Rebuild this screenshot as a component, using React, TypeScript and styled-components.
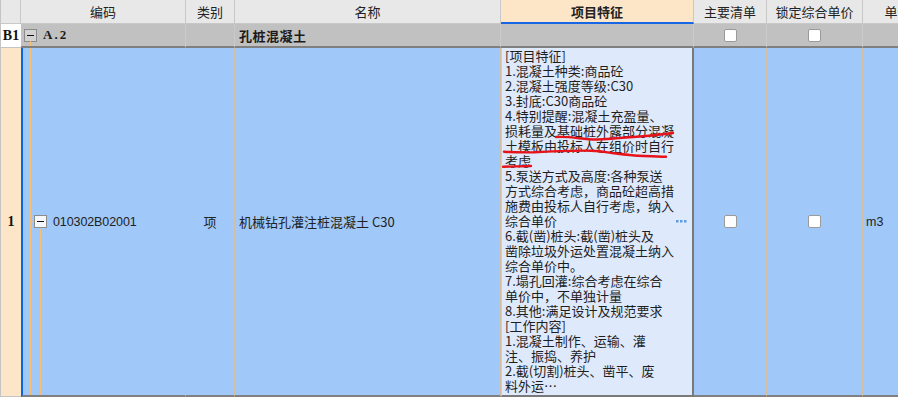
import React from "react";
import styled, { createGlobalStyle } from "styled-components";

const GlobalStyle = createGlobalStyle`
  html, body {
    margin: 0;
    padding: 0;
    background: #fff;
    overflow: hidden;
  }
  body {
    font-family: "Noto Sans CJK SC", "Liberation Sans", sans-serif;
    color: #222;
  }
`;

const FEATURES = [
  "[项目特征]",
  "1.混凝土种类:商品砼",
  "2.混凝土强度等级:C30",
  "3.封底:C30商品砼",
  "4.特别提醒:混凝土充盈量、",
  "损耗量及基础桩外露部分混凝",
  "土模板由投标人在组价时自行",
  "考虑",
  "5.泵送方式及高度:各种泵送",
  "方式综合考虑，商品砼超高措",
  "施费由投标人自行考虑，纳入",
  "综合单价",
  "6.截(凿)桩头:截(凿)桩头及",
  "凿除垃圾外运处置混凝土纳入",
  "综合单价中。",
  "7.塌孔回灌:综合考虑在综合",
  "单价中，不单独计量",
  "8.其他:满足设计及规范要求",
  "[工作内容]",
  "1.混凝土制作、运输、灌",
  "注、振捣、养护",
  "2.截(切割)桩头、凿平、废",
  "料外运…",
];

const Table = styled.div`
  display: grid;
  grid-template-columns: 21px 165px 49px 266px 193px 73px 96px 70px;
  grid-template-rows: 24px 24px 349px;
  width: 933px;
`;

const HeadCell = styled.div<{ $active?: boolean }>`
  display: flex;
  align-items: center;
  justify-content: center;
  box-sizing: border-box;
  background: ${(p) => (p.$active ? "#fde6c8" : "#e8e8e8")};
  border-right: 1px solid #c8c8c8;
  border-bottom: ${(p) => (p.$active ? "2px solid #1766e6" : "1px solid #c8c8c8")};
  font-size: 13px;
  font-weight: ${(p) => (p.$active ? 700 : 400)};
  color: #222;
  white-space: nowrap;
  overflow: hidden;
`;

const CornerCell = styled(HeadCell)`
  border-left: 1px solid #c4c4c4;
`;

const NumCell = styled.div<{ $peach?: boolean }>`
  display: flex;
  align-items: center;
  justify-content: center;
  box-sizing: border-box;
  background: ${(p) => (p.$peach ? "#fde6c8" : "#ffffff")};
  border-left: 1px solid #c4c4c4;
  border-bottom: 1px solid #c4c4c4;
  font-family: "Liberation Serif", serif;
  font-weight: 700;
  font-size: 14px;
  color: #111;
`;

const GroupCell = styled.div<{ $center?: boolean }>`
  position: relative;
  display: flex;
  align-items: center;
  justify-content: ${(p) => (p.$center ? "center" : "flex-start")};
  box-sizing: border-box;
  background: #c1c1c1;
  border-right: 1px solid #cbcbcb;
  border-bottom: 2px solid #808080;
  font-size: 13px;
  font-weight: 700;
  color: #1a1a1a;
`;

const GroupCode = styled(GroupCell)`
  padding-left: 3px;

  &::after {
    content: "";
    position: absolute;
    left: 9px;
    top: 17px;
    bottom: 0;
    width: 1px;
    background: #f7c06e;
  }
`;

const GroupName = styled(GroupCell)`
  padding-left: 4px;
  letter-spacing: 0.5px;
`;

const SerifLabel = styled.span`
  margin-left: 6px;
  font-family: "Liberation Serif", serif;
  font-weight: 700;
  font-size: 13px;
  letter-spacing: 2px;
`;

const MinusBox = styled.span<{ $stem?: boolean; $light?: boolean }>`
  position: relative;
  flex: none;
  width: 13px;
  height: 13px;
  box-sizing: border-box;
  border: 1px solid #8c8c8c;
  background: ${(p) => (p.$light ? "#f4f7fc" : "#d2d2d2")};

  &::before {
    content: "";
    position: absolute;
    left: 2px;
    right: 2px;
    top: 5px;
    height: 1px;
    background: #111;
  }

  &::after {
    content: "";
    display: ${(p) => (p.$stem ? "block" : "none")};
    position: absolute;
    left: -5px;
    width: 4px;
    top: 5px;
    height: 1px;
    background: #f7c06e;
  }
`;

const DataCell = styled.div<{ $center?: boolean }>`
  position: relative;
  display: flex;
  align-items: center;
  justify-content: ${(p) => (p.$center ? "center" : "flex-start")};
  box-sizing: border-box;
  background: #a0c8f8;
  border-right: 1px solid #d5bd9d;
  border-bottom: 2px solid #808080;
  font-size: 13px;
  color: #222;
`;

const CodeCell = styled(DataCell)`
  border-left: 2px solid #0b63e5;
  padding-left: 11px;

  &::before {
    content: "";
    position: absolute;
    left: 7px;
    top: 0;
    bottom: 0;
    width: 1px;
    background: #f7c06e;
  }

  &::after {
    content: "";
    position: absolute;
    left: 17px;
    top: calc(50% + 7px);
    bottom: 0;
    width: 1px;
    background: #f7c06e;
  }
`;

const CodeText = styled.span`
  margin-left: 6px;
  font-family: "Liberation Sans", sans-serif;
  font-size: 12.5px;
  letter-spacing: -0.1px;
  color: #222;
`;

const NameCell = styled(DataCell)`
  padding-left: 4px;
`;

const UnitCell = styled(DataCell)`
  padding-left: 3px;
  font-family: "Liberation Sans", sans-serif;
  font-size: 12.5px;
`;

const FeatureCell = styled.div`
  position: relative;
  box-sizing: border-box;
  background: #dee9fb;
  border-left: 1px solid #c9cdd3;
  border-right: 2px solid #7a7a7a;
  border-bottom: 2px solid #7a7a7a;
  padding: 0 0 0 3px;
  overflow: hidden;
`;

const FeatureLine = styled.div`
  height: 15px;
  line-height: 15px;
  font-size: 13px;
  white-space: nowrap;
  color: #1e1e1e;
`;

const Annotation = styled.svg`
  position: absolute;
  left: 0;
  top: 0;
  pointer-events: none;
`;

const MoreDots = styled.svg`
  position: absolute;
  right: 5px;
  top: calc(50% - 2px);
`;

const Check = styled.span`
  width: 13px;
  height: 13px;
  box-sizing: border-box;
  background: #fff;
  border: 1px solid #9a9a9a;
  border-radius: 2px;
`;

export default function App() {
  return (
    <>
      <GlobalStyle />
      <Table>
        <CornerCell />
        <HeadCell>编码</HeadCell>
        <HeadCell>类别</HeadCell>
        <HeadCell>名称</HeadCell>
        <HeadCell $active>项目特征</HeadCell>
        <HeadCell>主要清单</HeadCell>
        <HeadCell>锁定综合单价</HeadCell>
        <HeadCell>单位</HeadCell>

        <NumCell>B1</NumCell>
        <GroupCode>
          <MinusBox />
          <SerifLabel>A.2</SerifLabel>
        </GroupCode>
        <GroupCell />
        <GroupName>孔桩混凝土</GroupName>
        <GroupCell />
        <GroupCell $center>
          <Check />
        </GroupCell>
        <GroupCell $center>
          <Check />
        </GroupCell>
        <GroupCell />

        <NumCell $peach>1</NumCell>
        <CodeCell>
          <MinusBox $stem $light />
          <CodeText>010302B02001</CodeText>
        </CodeCell>
        <DataCell $center>项</DataCell>
        <NameCell>机械钻孔灌注桩混凝土 C30</NameCell>
        <FeatureCell>
          {FEATURES.map((line, i) => (
            <FeatureLine key={i}>{line}</FeatureLine>
          ))}
          <Annotation width="193" height="349" viewBox="0 0 193 349">
            <g fill="none" stroke="#e8121a" strokeWidth="2.4" strokeLinecap="round" strokeLinejoin="round">
              <path d="M54 89 C70 88 82 92 96 91.5 C120 90 150 88 171 85" />
              <path d="M2 103.7 C14 104.5 24 104.5 32 104.3 C45 103.5 70 102.5 89 102.7 C100 103 106 104.5 112 105.3 C122 106.5 130 107.5 136 107.7 C148 108.2 156 108.6 164 108.7" />
              <path d="M1 118.7 C10 118.5 20 118.3 29 118" />
            </g>
          </Annotation>
          <MoreDots width="11" height="3" viewBox="0 0 11 3">
            <rect x="0" y="0" width="2.5" height="2.5" fill="#5b9be0" />
            <rect x="4" y="0" width="2.5" height="2.5" fill="#5b9be0" />
            <rect x="8" y="0" width="2.5" height="2.5" fill="#5b9be0" />
          </MoreDots>
        </FeatureCell>
        <DataCell $center>
          <Check />
        </DataCell>
        <DataCell $center>
          <Check />
        </DataCell>
        <UnitCell>m3</UnitCell>
      </Table>
    </>
  );
}
